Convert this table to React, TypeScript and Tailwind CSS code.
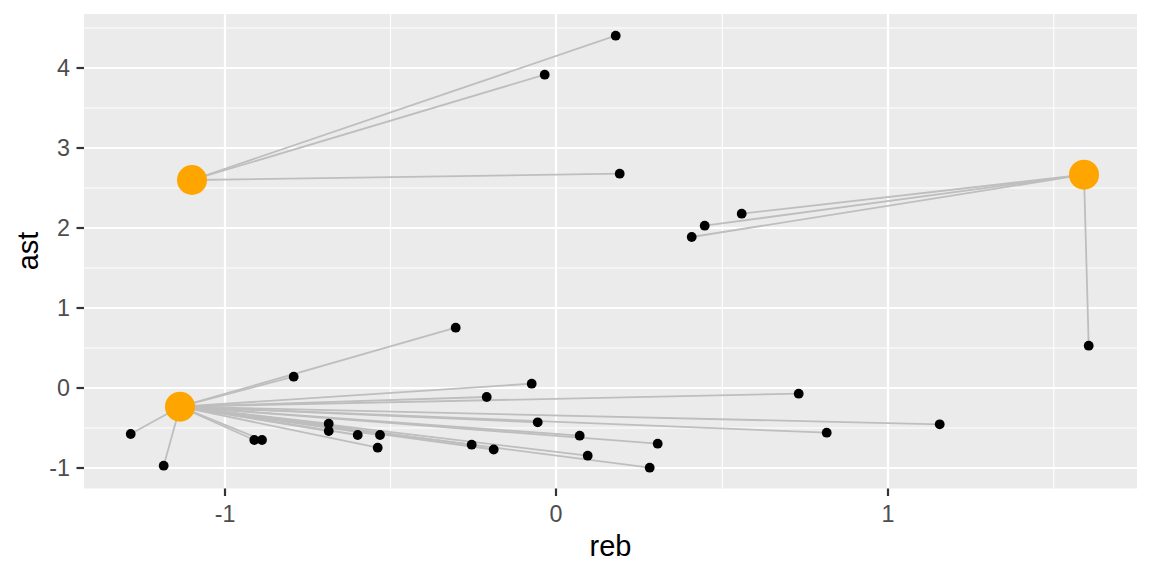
import React from 'react';

// page-pixel positions read off the plot
const PANEL = { left: 84, top: 14, right: 1137, bottom: 488.5 };

const xMajor = [
  { x: 225, label: '-1' },
  { x: 556, label: '0' },
  { x: 888, label: '1' },
];
const xMinor = [390.5, 722.3, 1053.8];

const yMajor = [
  { y: 68, label: '4' },
  { y: 148, label: '3' },
  { y: 228, label: '2' },
  { y: 308, label: '1' },
  { y: 388, label: '0' },
  { y: 468, label: '-1' },
];
const yMinor = [28, 108, 188, 268, 348, 428];

type Pt = [number, number];

interface Cluster {
  center: Pt;
  members: Pt[];
}

const clusters: Cluster[] = [
  {
    center: [192, 180],
    members: [
      [615.7, 35.7],
      [544.7, 74.7],
      [619.7, 173.7],
    ],
  },
  {
    center: [1084, 174.7],
    members: [
      [741.7, 213.7],
      [704.7, 225.7],
      [691.7, 237],
      [1088.7, 345.7],
    ],
  },
  {
    center: [180, 406.7],
    members: [
      [130.7, 434],
      [163.7, 465.7],
      [293.7, 376.7],
      [455.7, 327.7],
      [254.3, 440],
      [262, 440],
      [328.7, 423.7],
      [328.7, 431],
      [357.7, 435],
      [380, 435],
      [377.7, 447.7],
      [471.7, 444.7],
      [493.7, 449.5],
      [486.7, 397],
      [531.7, 383.7],
      [798.7, 393.7],
      [537.7, 422.3],
      [579.7, 435.7],
      [657.7, 443.7],
      [826.7, 432.7],
      [587.7, 455.7],
      [649.7, 467.7],
      [939.7, 424.3],
    ],
  },
];

const FONT = "'Liberation Sans', Arial, sans-serif";

function PlotPanel() {
  return (
    <svg width={1112} height={530} viewBox="40 0 1112 530" className="block shrink-0">
      <rect
        x={PANEL.left}
        y={PANEL.top}
        width={PANEL.right - PANEL.left}
        height={PANEL.bottom - PANEL.top}
        fill="#EBEBEB"
      />

      {/* minor grid */}
      {yMinor.map((y) => (
        <line key={`ym-${y}`} x1={PANEL.left} x2={PANEL.right} y1={y} y2={y} stroke="#FFFFFF" strokeWidth={1.1} />
      ))}
      {xMinor.map((x) => (
        <line key={`xm-${x}`} x1={x} x2={x} y1={PANEL.top} y2={PANEL.bottom} stroke="#FFFFFF" strokeWidth={1.1} />
      ))}

      {/* major grid */}
      {yMajor.map((t) => (
        <line key={`yM-${t.y}`} x1={PANEL.left} x2={PANEL.right} y1={t.y} y2={t.y} stroke="#FFFFFF" strokeWidth={2.2} />
      ))}
      {xMajor.map((t) => (
        <line key={`xM-${t.x}`} x1={t.x} x2={t.x} y1={PANEL.top} y2={PANEL.bottom} stroke="#FFFFFF" strokeWidth={2.2} />
      ))}

      {/* segments from each centroid */}
      {clusters.map((c, i) =>
        c.members.map((m, j) => (
          <line
            key={`seg-${i}-${j}`}
            x1={c.center[0]}
            y1={c.center[1]}
            x2={m[0]}
            y2={m[1]}
            stroke="#BEBEBE"
            strokeWidth={1.8}
          />
        ))
      )}

      {/* observations */}
      {clusters.map((c, i) =>
        c.members.map((m, j) => <circle key={`pt-${i}-${j}`} cx={m[0]} cy={m[1]} r={4.9} fill="#000000" />)
      )}

      {/* centroids */}
      {clusters.map((c, i) => (
        <circle key={`ctr-${i}`} cx={c.center[0]} cy={c.center[1]} r={15} fill="#FFA500" />
      ))}

      {/* axis ticks + labels */}
      {yMajor.map((t) => (
        <g key={`yt-${t.y}`}>
          <line x1={76.5} x2={PANEL.left} y1={t.y} y2={t.y} stroke="#333333" strokeWidth={2.2} />
          <text x={70} y={t.y + 8.3} textAnchor="end" fill="#4D4D4D" fontSize={23.3} fontFamily={FONT}>
            {t.label}
          </text>
        </g>
      ))}
      {xMajor.map((t) => (
        <g key={`xt-${t.x}`}>
          <line x1={t.x} x2={t.x} y1={PANEL.bottom} y2={496} stroke="#333333" strokeWidth={2.2} />
          <text x={t.x} y={522} textAnchor="middle" fill="#4D4D4D" fontSize={23.3} fontFamily={FONT}>
            {t.label}
          </text>
        </g>
      ))}
    </svg>
  );
}

export default function App() {
  return (
    <div className="flex h-[576px] w-[1152px] flex-col overflow-hidden bg-white font-['Liberation_Sans',Arial,sans-serif] text-black">
      <div className="flex h-[530px]">
        <div className="flex w-[40px] shrink-0 items-center justify-center pb-[28px] pl-[16px]">
          <span className="-rotate-90 whitespace-nowrap text-[29px] leading-[32px]">ast</span>
        </div>
        <PlotPanel />
      </div>
      <div className="ml-[84px] w-[1053px] text-center text-[29px] leading-[33px]">reb</div>
    </div>
  );
}
